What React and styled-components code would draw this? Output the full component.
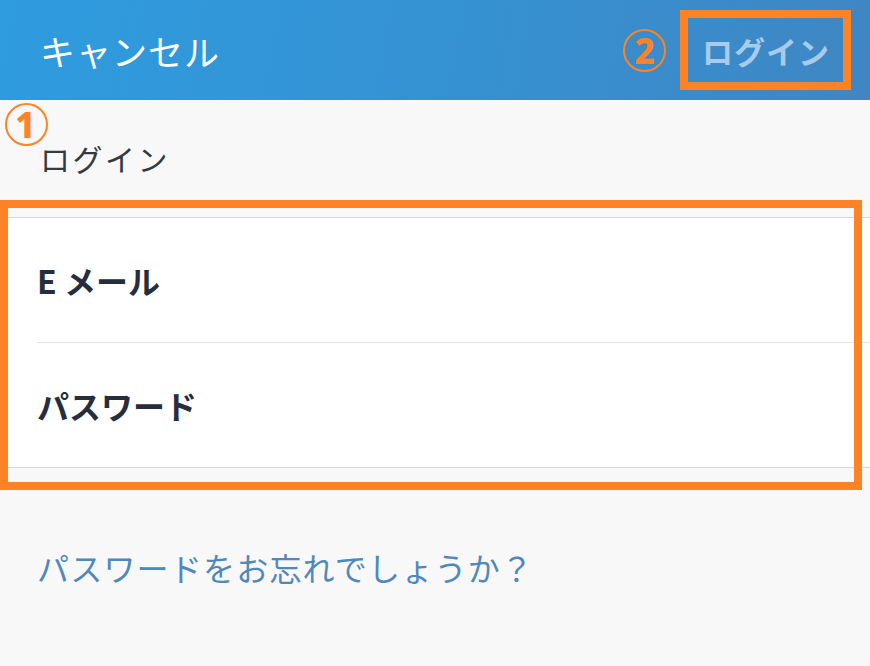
import styled, { createGlobalStyle } from "styled-components";

const GlobalStyle = createGlobalStyle`
  html, body {
    margin: 0;
    padding: 0;
    background: #f9f8f9;
  }
  body {
    font-family: "Noto Sans CJK JP", "Noto Sans", sans-serif;
    -webkit-font-smoothing: antialiased;
  }
`;

const ORANGE = "#ff8225";

export default function App() {
  return (
    <Page>
      <GlobalStyle />
      <Header>
        <HeaderText>キャンセル</HeaderText>
        <HeaderRight>
          <Marker size={43}>2</Marker>
          <Frame>
            <LoginButton>ログイン</LoginButton>
          </Frame>
        </HeaderRight>
      </Header>

      <SectionTitle>
        <MarkerSpot>
          <Marker size={43}>1</Marker>
        </MarkerSpot>
        ログイン
      </SectionTitle>

      <FieldGroup>
        <Field>
          <Label>E メール</Label>
        </Field>
        <Field last>
          <Label>パスワード</Label>
        </Field>
        <GroupFrame />
      </FieldGroup>

      <Forgot>パスワードをお忘れでしょうか？</Forgot>
    </Page>
  );
}

const Page = styled.div`
  width: 870px;
  min-height: 666px;
  background: #f9f8f9;
  overflow: hidden;
`;

const Header = styled.header`
  height: 100px;
  box-sizing: border-box;
  padding: 0 19px 0 40px;
  display: flex;
  align-items: center;
  justify-content: space-between;
  background: linear-gradient(100deg, #2e9cdf 0%, #3592d3 50%, #3f86c3 100%);
`;

const HeaderText = styled.span`
  color: #ffffff;
  font-size: 35px;
  font-weight: 400;
  line-height: 1;
  letter-spacing: 1px;
`;

const HeaderRight = styled.div`
  display: flex;
  align-items: center;
  gap: 14px;
`;

const Marker = styled.span`
  width: ${(p) => p.size}px;
  height: ${(p) => p.size}px;
  box-sizing: border-box;
  border: 2px solid ${ORANGE};
  border-radius: 50%;
  display: inline-flex;
  align-items: center;
  justify-content: center;
  color: ${ORANGE};
  font-family: "Noto Sans", "Liberation Sans", sans-serif;
  font-weight: 800;
  font-size: 35px;
  line-height: 1;
`;

const Frame = styled.div`
  width: 171px;
  height: 80px;
  box-sizing: border-box;
  border: 8px solid ${ORANGE};
  display: flex;
  align-items: center;
  padding-left: 14px;
`;

const LoginButton = styled.span`
  color: #a8cbe9;
  font-size: 31px;
  font-weight: 700;
  line-height: 1;
  letter-spacing: 1px;
`;

const SectionTitle = styled.div`
  position: relative;
  height: 117px;
  box-sizing: border-box;
  padding: 38px 0 0 40px;
  color: #333a42;
  font-size: 30px;
  line-height: 40px;
  letter-spacing: 2.5px;
`;

const MarkerSpot = styled.span`
  position: absolute;
  left: 5px;
  top: 3px;
  display: flex;
`;

const FieldGroup = styled.div`
  position: relative;
  background: #ffffff;
  border-top: 1px solid #d8d8d8;
  border-bottom: 1px solid #d8d8d8;
  padding-left: 37px;
`;

const Field = styled.div`
  height: 124px;
  display: flex;
  align-items: center;
  border-bottom: ${(p) => (p.last ? "none" : "1px solid #e2e2e2")};
`;

const Label = styled.span`
  color: #262d3c;
  font-size: 32px;
  font-weight: 700;
  line-height: 1;
`;

const GroupFrame = styled.div`
  position: absolute;
  left: 0;
  right: 8px;
  top: -18px;
  bottom: -23px;
  border: 8px solid ${ORANGE};
  pointer-events: none;
`;

const Forgot = styled.div`
  padding: 79px 0 0 37px;
  color: #4f88ba;
  font-size: 32px;
  line-height: 40px;
  letter-spacing: 1.2px;
`;
